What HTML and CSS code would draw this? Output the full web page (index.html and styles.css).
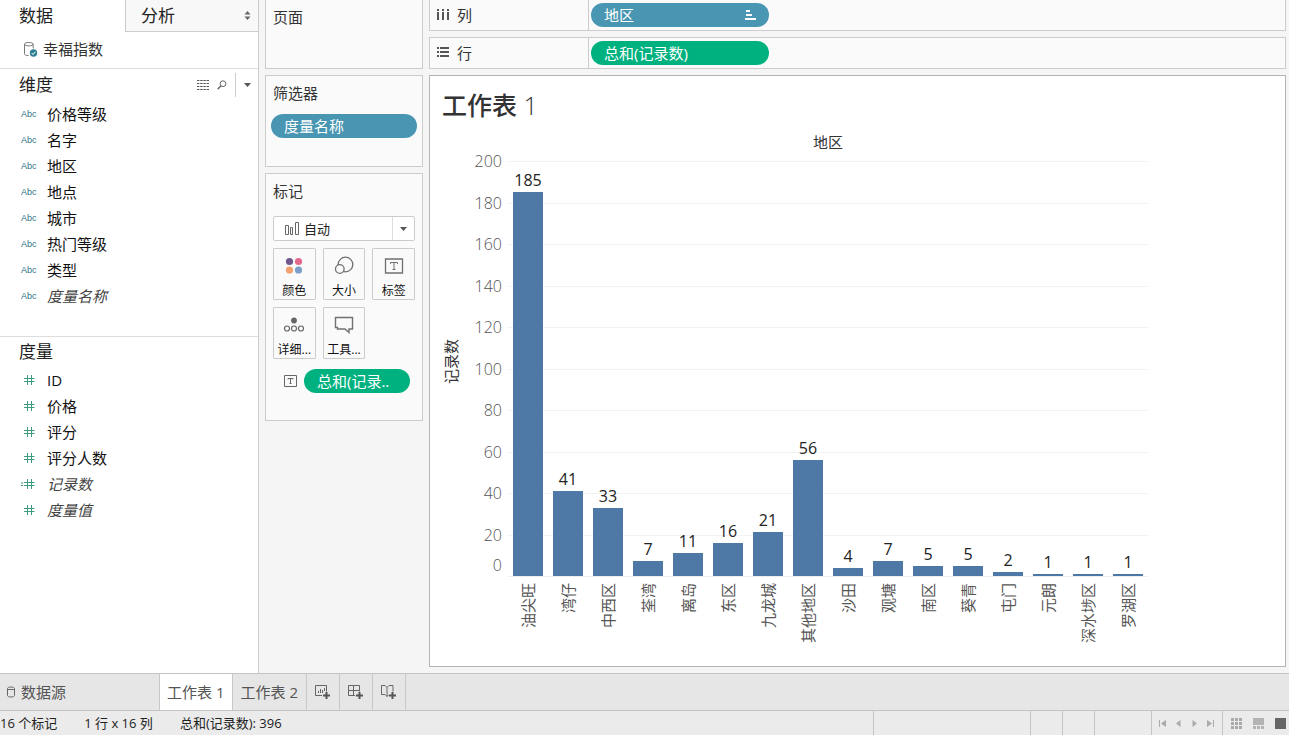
FILE: index.html
```html
<!DOCTYPE html>
<html lang="zh-CN">
<head>
<meta charset="utf-8">
<meta name="viewport" content="width=device-width, initial-scale=1">
<title>工作表 1</title>
<link rel="stylesheet" href="styles.css">
</head>
<body>
<div class="workspace">
  <aside class="sidebar">
    <div class="side-tabs">
      <button class="side-tab active" type="button">数据</button>
      <button class="side-tab" type="button">分析
        <svg width="7" height="9" viewBox="0 0 7 9"><path d="M3.500 0L6.500 3.500H.5zM3.500 9L.5 5.500h6z" fill="#666"/></svg>
      </button>
    </div>
    <a class="source" href="#source">
      <svg width="15" height="17" viewBox="0 0 15 17" fill="none"><path d="M1.500 3.200v9.600c0 1 1.500 1.700 4 1.700M1.500 3.200c0-1 1.800-1.700 4.300-1.700s4.400.7 4.400 1.700-1.900 1.700-4.400 1.700-4.300-.7-4.300-1.700zM10.200 3.200v4.300" stroke="#777"/><circle cx="10.500" cy="12" r="3.700" fill="#2f7f93"/><path d="M8.700 12l1.400 1.500 2.300-2.800" stroke="#fff"/></svg>
      幸福指数
    </a>
    <section class="fields">
      <header class="fields-head">
        <h2>维度</h2>
        <div class="fields-tools">
          <button class="icon-btn" type="button" aria-label="查看数据"><svg width="12" height="10" viewBox="0 0 12 10"><path d="M0 .5h12M0 3.500h12M0 6.500h12M0 9.500h12" stroke="#555" stroke-dasharray="2.400 .8"/></svg></button>
          <button class="icon-btn" type="button" aria-label="查找"><svg width="10" height="10" viewBox="0 0 10 10" fill="none" stroke="#666"><circle cx="6" cy="3.700" r="2.900"/><path d="M4 5.800L.7 9.200" stroke-width="1.400"/></svg></button>
          <button class="icon-btn menu" type="button" aria-label="菜单"><svg width="7" height="4" viewBox="0 0 7 4"><path d="M0 0h7L3.500 4z" fill="#555"/></svg></button>
        </div>
      </header>
      <ul class="field-list">
        <li><span class="abc">Abc</span>价格等级</li>
        <li><span class="abc">Abc</span>名字</li>
        <li><span class="abc">Abc</span>地区</li>
        <li><span class="abc">Abc</span>地点</li>
        <li><span class="abc">Abc</span>城市</li>
        <li><span class="abc">Abc</span>热门等级</li>
        <li><span class="abc">Abc</span>类型</li>
        <li><span class="abc">Abc</span><em>度量名称</em></li>
      </ul>
    </section>
    <section class="fields">
      <header class="fields-head"><h2>度量</h2></header>
      <svg class="defs" width="0" height="0"><defs><g id="hash"><path d="M6.500 1v10M10.500 1v10M3 4.500h10.500M3 7.500h10.500" stroke="#3f9a80" fill="none"/></g></defs></svg>
      <ul class="field-list">
        <li><svg class="hash" viewBox="0 0 16 12"><use href="#hash"/></svg>ID</li>
        <li><svg class="hash" viewBox="0 0 16 12"><use href="#hash"/></svg>价格</li>
        <li><svg class="hash" viewBox="0 0 16 12"><use href="#hash"/></svg>评分</li>
        <li><svg class="hash" viewBox="0 0 16 12"><use href="#hash"/></svg>评分人数</li>
        <li><svg class="hash" viewBox="0 0 16 12"><use href="#hash"/><path d="M0 5h2.200M0 7.500h2.200" stroke="#3f9a80"/></svg><em>记录数</em></li>
        <li><svg class="hash" viewBox="0 0 16 12"><use href="#hash"/></svg><em>度量值</em></li>
      </ul>
    </section>
  </aside>

  <div class="cards">
    <section class="card pages"><h3>页面</h3></section>
    <section class="card filters"><h3>筛选器</h3><button class="pill blue" type="button">度量名称</button></section>
    <section class="card marks">
      <h3>标记</h3>
      <div class="mark-type">
        <svg class="mark-type-icon" width="14" height="13" viewBox="0 0 14 13" fill="none" stroke="#666"><path d="M.5 3.500h3v9h-3zM5.500 5.500h2v7h-2zM10.500.5h3v12h-3z"/></svg>
        <select aria-label="标记类型"><option>自动</option></select>
        <span class="mark-type-arrow"><svg width="7" height="4" viewBox="0 0 7 4"><path d="M0 0h7L3.500 4z" fill="#555"/></svg></span>
      </div>
      <div class="mark-grid">
        <button type="button"><svg width="22" height="22" viewBox="0 0 22 22"><circle cx="6.500" cy="6.500" r="3.600" fill="#71578c"/><circle cx="15.500" cy="6.500" r="3.600" fill="#e4688b"/><circle cx="6.500" cy="15" r="3.600" fill="#f5a070"/><circle cx="15.500" cy="15" r="3.600" fill="#7b9dc7"/></svg>颜色</button>
        <button type="button"><svg width="22" height="22" viewBox="0 0 22 22" fill="none" stroke="#707070" stroke-width="1.300"><circle cx="12.500" cy="9.500" r="7.300"/><circle cx="6.800" cy="14" r="4.300" fill="#fafafa"/></svg>大小</button>
        <button type="button"><svg width="22" height="22" viewBox="0 0 22 22" fill="none" stroke="#707070"><path d="M2.500 4h17v14h-17z" stroke-width="1.300"/><path d="M7.500 9V7.500h7V9M11 7.500v7M9.500 14.500h3"/></svg>标签</button>
        <button type="button"><svg width="22" height="22" viewBox="0 0 22 22" fill="none" stroke="#666" stroke-width="1.200"><circle cx="11" cy="6.500" r="2.900" fill="#666" stroke="none"/><circle cx="4" cy="14.500" r="2.500"/><circle cx="11" cy="14.500" r="2.500"/><circle cx="18" cy="14.500" r="2.500"/></svg>详细...</button>
        <button type="button"><svg width="22" height="22" viewBox="0 0 22 22" fill="none" stroke="#707070" stroke-width="1.400"><path d="M2.500 3.500h17v11.500h-3.500v3.500L12 15H4.500v-1.500h-2z"/></svg>工具...</button>
      </div>
      <div class="encoding">
        <svg width="13" height="12" viewBox="0 0 13 12" fill="none" stroke="#666"><path d="M.5.5h12v11H.5zM4 4.500v-1h5v1M6.500 3.500v5M5.500 8.500h2"/></svg>
        <button class="pill green" type="button">总和(记录..</button>
      </div>
    </section>
  </div>

  <main class="main">
    <div class="shelf first">
      <div class="shelf-name"><svg width="12" height="12" viewBox="0 0 12 12" fill="#555"><path d="M0 0h2v2H0zM5 0h2v2H5zM10 0h2v2h-2zM0 3h2v8H0zM5 3h2v8H5zM10 3h2v8h-2z"/></svg>列</div>
      <button class="pill blue" type="button">地区<svg width="11" height="10" viewBox="0 0 11 10"><path d="M1 1h4M1 5h6M0 9h11" stroke="#fff" stroke-width="1.800"/></svg></button>
    </div>
    <div class="shelf">
      <div class="shelf-name"><svg width="12" height="12" viewBox="0 0 12 12" fill="#555"><path d="M0 0h2v2H0zM0 4h2v2H0zM0 8h2v2H0zM3 0h9v2H3zM3 4h9v2H3zM3 8h9v2H3z"/></svg>行</div>
      <button class="pill green" type="button">总和(记录数)</button>
    </div>
    <section class="view">
      <h1>工作表 <span>1</span></h1>
      <div class="chart">
        <div class="chart-head">地区</div>
        <div class="axis-title"><span class="turned">记录数</span></div>
        <div class="axis">
          <div>200</div><div>180</div><div>160</div><div>140</div><div>120</div><div>100</div><div>80</div><div>60</div><div>40</div><div>20<span class="zero">0</span></div>
        </div>
        <div class="plot">
          <div class="grid-lines"><i></i><i></i><i></i><i></i><i></i><i></i><i></i><i></i><i></i><i></i></div>
          <div class="col"><b>185</b><div class="bar" style="height:92.5%"></div></div>
          <div class="col"><b>41</b><div class="bar" style="height:20.5%"></div></div>
          <div class="col"><b>33</b><div class="bar" style="height:16.5%"></div></div>
          <div class="col"><b>7</b><div class="bar" style="height:3.5%"></div></div>
          <div class="col"><b>11</b><div class="bar" style="height:5.5%"></div></div>
          <div class="col"><b>16</b><div class="bar" style="height:8%"></div></div>
          <div class="col"><b>21</b><div class="bar" style="height:10.5%"></div></div>
          <div class="col"><b>56</b><div class="bar" style="height:28%"></div></div>
          <div class="col"><b>4</b><div class="bar" style="height:2%"></div></div>
          <div class="col"><b>7</b><div class="bar" style="height:3.5%"></div></div>
          <div class="col"><b>5</b><div class="bar" style="height:2.5%"></div></div>
          <div class="col"><b>5</b><div class="bar" style="height:2.5%"></div></div>
          <div class="col"><b>2</b><div class="bar" style="height:1%"></div></div>
          <div class="col"><b>1</b><div class="bar" style="height:0.5%"></div></div>
          <div class="col"><b>1</b><div class="bar" style="height:0.5%"></div></div>
          <div class="col"><b>1</b><div class="bar" style="height:0.5%"></div></div>
        </div>
        <div class="names">
          <span class="name"><span class="turned">油尖旺</span></span>
          <span class="name"><span class="turned">湾仔</span></span>
          <span class="name"><span class="turned">中西区</span></span>
          <span class="name"><span class="turned">荃湾</span></span>
          <span class="name"><span class="turned">离岛</span></span>
          <span class="name"><span class="turned">东区</span></span>
          <span class="name"><span class="turned">九龙城</span></span>
          <span class="name"><span class="turned">其他地区</span></span>
          <span class="name"><span class="turned">沙田</span></span>
          <span class="name"><span class="turned">观塘</span></span>
          <span class="name"><span class="turned">南区</span></span>
          <span class="name"><span class="turned">葵青</span></span>
          <span class="name"><span class="turned">屯门</span></span>
          <span class="name"><span class="turned">元朗</span></span>
          <span class="name"><span class="turned">深水埗区</span></span>
          <span class="name"><span class="turned">罗湖区</span></span>
        </div>
      </div>
    </section>
  </main>
</div>

<nav class="sheets">
  <button class="sheet source-tab" type="button"><svg width="8" height="12" viewBox="0 0 8 12" fill="none" stroke="#666"><path d="M.5 2.500v7c0 .8 1.500 1.500 3.500 1.500s3.500-.7 3.500-1.500v-7C7.500 1.700 6 1 4 1S.5 1.700.5 2.500zM.5 3.500h7"/></svg>数据源</button>
  <button class="sheet active" type="button">工作表 1</button>
  <button class="sheet" type="button">工作表 2</button>
  <button class="sheet new" type="button" aria-label="新建工作表"><svg width="17" height="16" viewBox="0 0 17 16" fill="none" stroke="#666"><path d="M8 11.500H1.500v-10h11v6M4.500 9V7M6.500 9V5M8.500 9V6M10.500 7V4"/><path d="M12.500 8v7M9 11.500h7" stroke="#555" stroke-width="2"/></svg></button>
  <button class="sheet new" type="button" aria-label="新建仪表板"><svg width="17" height="16" viewBox="0 0 17 16" fill="none" stroke="#666"><path d="M8 11.500H1.500v-10h11v6M1.500 6.500h11M6.500 1.500v10"/><path d="M12.500 8v7M9 11.500h7" stroke="#555" stroke-width="2"/></svg></button>
  <button class="sheet new" type="button" aria-label="新建故事"><svg width="17" height="16" viewBox="0 0 17 16" fill="none" stroke="#666"><path d="M7 3.500L5 1.500H1.500v9H5l2 2 1.500-1.500M7 3.500v9M7 3.500l2-2h4v6"/><path d="M12.500 8v7M9 11.500h7" stroke="#555" stroke-width="2"/></svg></button>
</nav>

<footer class="status">
  <span>16 个标记</span><span>1 行 x 16 列</span><span>总和(记录数): 396</span>
  <div class="status-right">
    <i class="slot wide"></i><i class="slot"></i><i class="slot"></i><i class="slot medium"></i>
    <div class="slot pager">
      <button class="icon-btn" type="button" aria-label="第一个"><svg width="7" height="7" viewBox="0 0 7 7"><path d="M0 0h1v7H0zM7 0v7L2 3.500z" fill="#aaa"/></svg></button>
      <button class="icon-btn" type="button" aria-label="上一个"><svg width="7" height="7" viewBox="0 0 7 7"><path d="M5.500 0v7L1 3.500z" fill="#aaa"/></svg></button>
      <button class="icon-btn" type="button" aria-label="下一个"><svg width="7" height="7" viewBox="0 0 7 7"><path d="M1.500 0v7L6 3.500z" fill="#aaa"/></svg></button>
      <button class="icon-btn" type="button" aria-label="最后一个"><svg width="7" height="7" viewBox="0 0 7 7"><path d="M6 0h1v7H6zM0 0v7l5-3.500z" fill="#aaa"/></svg></button>
    </div>
    <div class="slot modes">
      <button class="icon-btn" type="button" aria-label="工作表排序程序"><svg width="11" height="11" viewBox="0 0 11 11"><path d="M0 1.500h11M0 5.500h11M0 9.500h11" stroke="#aaa" stroke-width="3" stroke-dasharray="3 1"/></svg></button>
      <button class="icon-btn" type="button" aria-label="缩略图"><svg width="11" height="11" viewBox="0 0 11 11"><path d="M0 0h11v7H0z" fill="#b4b4b4"/><path d="M0 9.500h11" stroke="#b4b4b4" stroke-width="3" stroke-dasharray="3 1"/></svg></button>
      <button class="icon-btn" type="button" aria-label="标签"><svg width="11" height="11" viewBox="0 0 11 11"><path d="M0 0h11v11H0z" fill="#666"/></svg></button>
    </div>
  </div>
</footer>
</body>
</html>
```

FILE: styles.css
```css
* {
  box-sizing: border-box;
}

body {
  margin: 0;
  min-height: 100vh;
  display: flex;
  flex-direction: column;
  background: #f5f5f5;
  color: #222;
  font-family: "Open Sans", "Noto Sans CJK SC", sans-serif;
  font-size: 15px;
  line-height: 20px;
  white-space: nowrap;
}

button,
select {
  margin: 0;
  padding: 0;
  border: 0;
  background: none;
  color: inherit;
  font: inherit;
}

h1,
h2,
h3,
ul {
  margin: 0;
  padding: 0;
  font-weight: 400;
}

svg {
  display: block;
  flex: none;
}

.defs {
  position: absolute;
}

.workspace {
  flex: 1;
  display: flex;
}

/* Data pane */
.sidebar {
  flex: 0 0 259px;
  background: #fff;
  border-right: 1px solid #ccc;
}

.side-tabs {
  display: flex;
  height: 32px;
}

.side-tab {
  flex: 1;
  display: flex;
  align-items: center;
  justify-content: space-between;
  padding: 0 7px 0 15px;
  background: #f8f8f8;
  border: solid #ccc;
  border-width: 0 0 1px 1px;
  font-size: 17px;
}

.side-tab.active {
  flex: 0 0 125px;
  padding-left: 19px;
  background: #fff;
  border: 0;
}

.source {
  display: flex;
  align-items: center;
  gap: 5px;
  height: 37px;
  padding: 0 0 2px 23px;
  border-bottom: 1px solid #ddd;
  color: #333;
  text-decoration: none;
}

.fields-head {
  display: flex;
  align-items: center;
  justify-content: space-between;
  height: 32px;
  padding: 0 7px 0 19px;
}

.fields-head h2 {
  font-size: 17px;
}

.fields + .fields {
  margin-top: 27px;
  border-top: 1px solid #ddd;
}

.fields + .fields .fields-head {
  height: 30px;
}

.fields-tools {
  display: flex;
  align-items: center;
  gap: 8px;
}

.icon-btn {
  display: flex;
  align-items: center;
  justify-content: center;
}

.menu {
  height: 24px;
  padding-left: 8px;
  border-left: 1px solid #ccc;
}

.field-list {
  list-style: none;
}

.field-list li {
  display: flex;
  align-items: center;
  height: 26px;
  padding-left: 21px;
  color: #111;
}

.field-list em {
  color: #444;
}

.abc {
  width: 26px;
  color: #2f7388;
  font-family: "Liberation Sans", sans-serif;
  font-size: 9px;
}

.hash {
  width: 16px;
  height: 12px;
  margin-right: 10px;
}

/* Cards */
.cards {
  flex: 0 0 158px;
  display: flex;
  flex-direction: column;
  gap: 6px;
  margin: 0 6px;
}

.card {
  padding: 7px;
  background: #fafafa;
  border: 1px solid #ccc;
}

.card h3 {
  color: #333;
  font-size: 15px;
}

.pages {
  min-height: 69px;
  border-top: 0;
}

.filters {
  min-height: 92px;
  padding: 7px 5px;
}

.filters h3 {
  padding-left: 2px;
  margin-bottom: 11px;
}

.marks {
  min-height: 248px;
}

.pill {
  display: flex;
  align-items: center;
  justify-content: space-between;
  width: 100%;
  height: 24px;
  padding: 0 13px;
  border-radius: 12px;
  color: #fff;
}

.blue {
  background: #4996b2;
}

.green {
  background: #00b180;
}

.mark-type {
  position: relative;
  display: flex;
  height: 25px;
  margin-top: 15px;
  background: #fff;
  border: 1px solid #ccc;
  border-radius: 2px;
}

.mark-type select {
  flex: 1;
  padding-left: 30px;
  appearance: none;
  font-size: 13px;
}

.mark-type-icon {
  position: absolute;
  left: 11px;
  top: 5px;
}

.mark-type-arrow {
  flex: 0 0 22px;
  display: flex;
  align-items: center;
  justify-content: center;
  border-left: 1px solid #ddd;
}

.mark-grid {
  display: grid;
  grid-template-columns: repeat(3, 1fr);
  gap: 7px;
  margin-top: 7px;
}

.mark-grid button {
  display: flex;
  flex-direction: column;
  align-items: center;
  justify-content: space-between;
  height: 52px;
  padding-top: 6px;
  border: 1px solid #ccc;
  border-radius: 1px;
  color: #111;
  font-size: 12px;
  line-height: 16px;
}

.encoding {
  display: flex;
  align-items: center;
  gap: 7px;
  margin: 10px 5px 0 11px;
}

/* Shelves and view */
.main {
  flex: 1;
  min-width: 0;
  display: flex;
  flex-direction: column;
  gap: 6px;
  padding: 0 3px 6px 0;
}

.shelf {
  display: flex;
  align-items: center;
  gap: 2px;
  height: 32px;
  background: #fafafa;
  border: 1px solid #ccc;
}

.shelf.first {
  height: 31px;
  border-top: 0;
}

.shelf-name {
  flex: 0 0 159px;
  align-self: stretch;
  display: flex;
  align-items: center;
  gap: 8px;
  padding-left: 7px;
  border-right: 1px solid #ccc;
  color: #333;
}

.shelf .pill {
  width: 178px;
}

.view {
  flex: 1;
  padding: 14px 12px;
  background: #fff;
  border: 1px solid #b4b4b4;
}

.view h1 {
  color: #333;
  font-size: 25px;
  font-weight: 500;
  line-height: 30px;
}

.view h1 span {
  font-weight: 300;
}

.chart {
  display: grid;
  grid-template-columns: 18px 42px minmax(0, 640px);
  column-gap: 3px;
  margin-top: 12px;
}

.chart-head {
  grid-column: 3;
  margin-bottom: 9px;
  color: #333;
  text-align: center;
}

.turned {
  writing-mode: vertical-rl;
  text-orientation: sideways;
  transform: rotate(180deg);
}

.axis-title {
  display: flex;
  align-items: center;
  justify-content: center;
  padding-bottom: 14px;
  color: #333;
}

.axis {
  display: grid;
  grid-template-rows: repeat(10, minmax(0, 1fr));
  height: 415px;
  margin: -10px 3px 0 0;
  color: #555;
  font-size: 16px;
  font-weight: 300;
  text-align: right;
}

.zero {
  display: block;
  margin-top: 10px;
}

.plot {
  position: relative;
  display: flex;
  height: 416px;
  border-bottom: 1px solid #eee;
}

.grid-lines {
  position: absolute;
  inset: 0;
  display: grid;
  grid-template-rows: repeat(10, 1fr);
}

.grid-lines i {
  border-top: 1px solid #f2f2f2;
}

.col {
  position: relative;
  flex: 1;
  display: flex;
  flex-direction: column;
  align-items: center;
  justify-content: flex-end;
}

.col b {
  margin-bottom: 2px;
  font-size: 16px;
  font-weight: 400;
}

.bar {
  flex: none;
  width: 75%;
  background: #4e79a7;
}

.names {
  grid-column: 3;
  display: flex;
  padding-top: 6px;
  color: #555;
}

.name {
  flex: 1;
  display: flex;
  align-items: flex-start;
  justify-content: center;
}

/* Sheet tabs */
.sheets {
  display: flex;
  height: 38px;
  background: #e6e6e6;
  border: solid #c4c4c4;
  border-width: 1px 0;
}

.sheet {
  display: flex;
  align-items: center;
  padding: 0 8px 0 7px;
  border-right: 1px solid #c8c8c8;
  color: #555;
}

.source-tab {
  flex: 0 0 160px;
  gap: 6px;
}

.sheet.active {
  background: #fff;
}

.sheet.new {
  flex: 0 0 32px;
}

/* Status bar */
.status {
  display: flex;
  align-items: center;
  gap: 27px;
  height: 24px;
  background: #ebebeb;
  font-size: 13px;
}

.status-right {
  display: flex;
  align-self: stretch;
  margin-left: auto;
}

.slot {
  flex: 0 0 32px;
  border-left: 1px solid #c4c4c4;
}

.slot.wide {
  flex-basis: 157px;
}

.slot.medium {
  flex-basis: 57px;
}

.slot.pager {
  flex-basis: 71px;
  display: flex;
  align-items: center;
  gap: 9px;
  padding-left: 7px;
}

.slot.modes {
  flex-basis: 67px;
  display: flex;
  align-items: center;
  gap: 11px;
  padding-left: 8px;
}
```
